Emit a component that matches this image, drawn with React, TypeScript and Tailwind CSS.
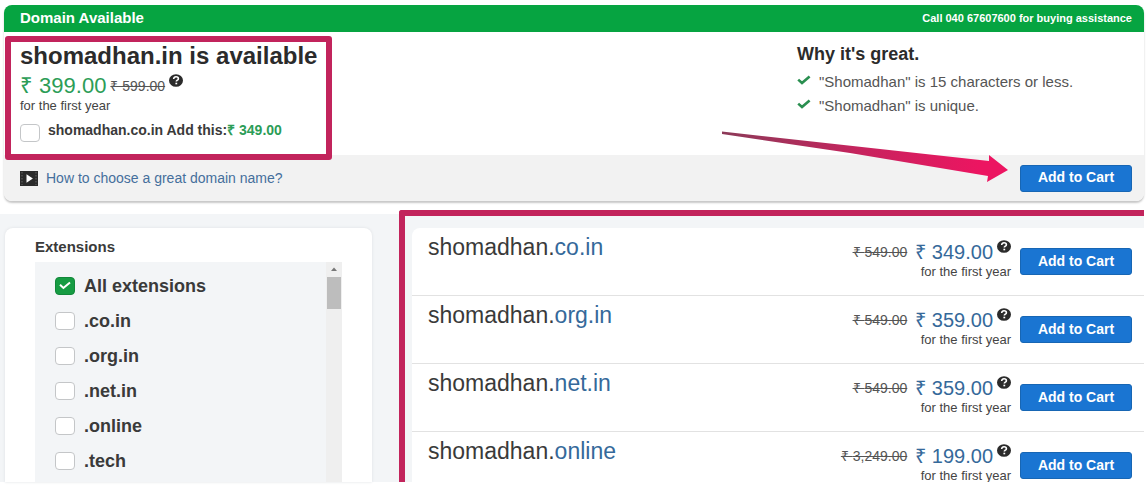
import React from "react";

type Result = { tld: string; was: string; price: string };

const results: Result[] = [
  { tld: "co.in", was: "549.00", price: "349.00" },
  { tld: "org.in", was: "549.00", price: "359.00" },
  { tld: "net.in", was: "549.00", price: "359.00" },
  { tld: "online", was: "3,249.00", price: "199.00" },
];

const extensions = ["All extensions", ".co.in", ".org.in", ".net.in", ".online", ".tech"];

function HelpIcon() {
  return (
    <svg viewBox="0 0 14 13" className="h-[13px] w-[14px] shrink-0" role="img" aria-label="Help">
      <ellipse cx="7" cy="6.5" rx="7" ry="6.3" fill="#2b2b2b" />
      <path d="M4.7 4.9C4.7 3.5 5.7 2.8 7 2.8s2.4.8 2.4 1.9c0 1.5-2.1 1.5-2.1 2.9" fill="none" stroke="#fff" strokeWidth="1.6" />
      <rect x="6.4" y="8.7" width="1.8" height="1.6" fill="#fff" />
    </svg>
  );
}

function CheckIcon() {
  return (
    <svg viewBox="0 0 14 10" className="mb-1 h-[10px] w-[14px] shrink-0" aria-hidden="true">
      <path d="M1.2 4.6 5 8 12.6 1.4" fill="none" stroke="#2a8f50" strokeWidth="2.6" />
    </svg>
  );
}

function PlayIcon() {
  return (
    <svg viewBox="0 0 18 15" className="h-[15px] w-[18px] shrink-0" aria-hidden="true">
      <rect width="18" height="15" fill="#2b2b2b" />
      <path d="M6.5 3.2v8.6l6.4-4.3z" fill="#fff" />
      <path d="M2 1v13M16 1v13" stroke="#666" strokeWidth="1" strokeDasharray="1.5 1.5" />
    </svg>
  );
}

function Tick({ id, checked }: { id: string; checked?: boolean }) {
  return (
    <span className="grid shrink-0">
      <input
        id={id}
        type="checkbox"
        defaultChecked={checked}
        className="peer col-start-1 row-start-1 h-[18px] w-5 appearance-none rounded border border-[#c4c6c8] bg-white checked:border-[#12873a] checked:bg-[#169c43]"
      />
      <svg viewBox="0 0 20 18" className="pointer-events-none invisible col-start-1 row-start-1 h-[18px] w-5 peer-checked:visible" aria-hidden="true">
        <path d="m5 7.8 3.4 3.2L15 5.4" fill="none" stroke="#fff" strokeWidth="2" />
      </svg>
    </span>
  );
}

function CartButton() {
  return (
    <button
      type="button"
      className="h-[27px] w-[112px] shrink-0 rounded-[3px] border border-[#1766b4] bg-[#1a75d2] pb-0.5 text-sm leading-none font-bold text-white"
    >
      Add to Cart
    </button>
  );
}

export default function App() {
  return (
    <div className="flex h-screen flex-col overflow-hidden bg-white pr-0.5 pb-3 font-['Liberation_Sans',Arial,sans-serif] text-[#3a3a3a]">
      <section className="relative mt-[5px] ml-1 rounded-lg shadow-[0_2px_2px_#c8c8c8]">
        <header className="flex h-[27px] items-center justify-between rounded-t-lg bg-[#06a441] pr-3 pl-4 font-bold text-white">
          <h2 className="text-[15px]">Domain Available</h2>
          <p className="text-[11px]">Call 040 67607600 for buying assistance</p>
        </header>

        <div className="flex h-[123px] justify-between pt-3 pl-4">
          <div>
            <h1 className="text-2xl leading-6 font-bold text-[#2b2b2b]">shomadhan.in is available</h1>
            <p className="mt-[6px] flex h-6 items-center gap-1">
              <span className="text-[22px] leading-6 text-[#2c9d57]">₹ 399.00</span>
              <s className="text-sm text-[#555]">₹ 599.00</s>
              <span className="self-start"><HelpIcon /></span>
            </p>
            <p className="text-[13px] leading-4 text-[#444]">for the first year</p>
            <div className="mt-2 flex items-start gap-2">
              <span className="pt-0.5"><Tick id="addon" /></span>
              <label htmlFor="addon" className="text-sm leading-4 font-bold">
                shomadhan.co.in Add this:<span className="text-[#2c9d57]">₹ 349.00</span>
              </label>
            </div>
          </div>
          <div className="w-[347px] shrink-0">
            <h3 className="-mt-0.5 text-lg leading-6 font-bold text-[#2b2b2b]">Why it's great.</h3>
            <ul className="mt-1 text-[15px] leading-6 text-[#555]">
              <li className="flex items-center gap-2"><CheckIcon />"Shomadhan" is 15 characters or less.</li>
              <li className="flex items-center gap-2"><CheckIcon />"Shomadhan" is unique.</li>
            </ul>
          </div>
        </div>

        <footer className="flex h-[46px] items-center justify-between rounded-b-lg bg-[#f2f2f2] pr-3 pl-4">
          <a href="#guide" className="flex items-center gap-2 text-sm text-[#456f9c]">
            <PlayIcon />
            How to choose a great domain name?
          </a>
          <CartButton />
        </footer>

        <div className="pointer-events-none absolute top-[31px] left-px h-[124px] w-[327px] rounded-[3px] border-[6px] border-[#c2245c]" />
        <svg viewBox="0 0 290 56" className="pointer-events-none absolute top-[123px] right-[134px] h-14 w-[290px]" aria-hidden="true">
          <defs>
            <linearGradient id="arrow" x1="0" x2="1">
              <stop offset="0" stopColor="#8c3a58" />
              <stop offset="0.5" stopColor="#c8235e" />
              <stop offset="0.9" stopColor="#ec1561" />
            </linearGradient>
          </defs>
          <path d="M2 3.5 269 33v-6l19 15-21 12 1-6L130 25 2 6z" fill="url(#arrow)" />
        </svg>
      </section>

      <div className="relative mt-[13px] flex min-h-0 flex-1 bg-[#f3f5f7] pt-[14px] pl-[5px]">
        <aside className="mr-10 flex w-[367px] shrink-0 flex-col rounded-t-lg bg-white px-[30px] pt-[7px] shadow-[0_0_3px_#dcdfe2]">
          <h3 className="text-[15px] leading-6 font-bold">Extensions</h3>
          <div className="mt-[3px] flex min-h-0 flex-1 justify-between overflow-hidden bg-[#f3f5f7]">
            <ul className="pt-[6px] pl-5">
              {extensions.map((name, i) => (
                <li key={name} className="flex h-[35px] items-center gap-[9px]">
                  <Tick id={"ext-" + i} checked={i === 0} />
                  <label htmlFor={"ext-" + i} className="text-lg font-bold">{name}</label>
                </li>
              ))}
            </ul>
            <div className="flex w-4 flex-col items-center bg-[#efefef]">
              <svg viewBox="0 0 16 15" className="h-[15px] w-4 shrink-0" aria-hidden="true">
                <path d="m5 9 3-3.5L11 9z" fill="#777" />
              </svg>
              <div className="h-8 w-[14px] bg-[#bdbdbd]" />
            </div>
          </div>
        </aside>

        <main className="min-w-0 flex-1 overflow-hidden rounded-tl-lg bg-white">
          <ul className="divide-y divide-[#e2e2e2]">
            {results.map((r) => (
              <li key={r.tld} className="flex h-[68px] shrink-0 items-start pt-[7px] pr-3 pl-4">
                <h3 className="flex-1 text-[23px] leading-6">
                  shomadhan.<span className="text-[#35699a]">{r.tld}</span>
                </h3>
                <div className="mr-[9px] pt-[5px]">
                  <p className="flex h-6 items-center justify-end gap-1">
                    <s className="mr-1 text-sm text-[#555]">₹ {r.was}</s>
                    <span className="text-xl leading-6 text-[#35699a]">₹ {r.price}</span>
                    <span className="self-start"><HelpIcon /></span>
                  </p>
                  <p className="text-right text-[13px] leading-4 text-[#444]">for the first year</p>
                </div>
                <div className="pt-[13px]"><CartButton /></div>
              </li>
            ))}
          </ul>
        </main>

        <div className="pointer-events-none absolute -top-1 right-0 bottom-0 left-[399px] rounded-tl-[3px] border-t-[6px] border-l-[6px] border-[#c2245c]" />
      </div>
    </div>
  );
}
